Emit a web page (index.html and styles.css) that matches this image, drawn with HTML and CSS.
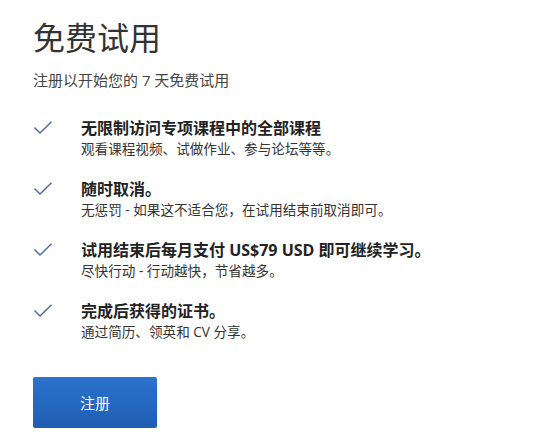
FILE: index.html
```html
<!DOCTYPE html>
<html lang="zh-CN">
<head>
<meta charset="UTF-8" />
<meta name="viewport" content="width=device-width, initial-scale=1" />
<title>免费试用</title>
<link rel="stylesheet" href="styles.css">
</head>
<body>
<main class="trial">
  <h1>免费试用</h1>
  <p class="intro">注册以开始您的 7 天免费试用</p>

  <ul class="benefits">
    <li>
      <svg class="check" viewBox="0 0 18 13" width="18" height="13"><path d="M0.5 6.5 L6 12 L17.5 0.8" fill="none" stroke="#4a68a8" stroke-width="1.4"/></svg>
      <div>
        <h3>无限制访问专项课程中的全部课程</h3>
        <p>观看课程视频、试做作业、参与论坛等等。</p>
      </div>
    </li>
    <li>
      <svg class="check" viewBox="0 0 18 13" width="18" height="13"><path d="M0.5 6.5 L6 12 L17.5 0.8" fill="none" stroke="#4a68a8" stroke-width="1.4"/></svg>
      <div>
        <h3>随时取消。</h3>
        <p>无惩罚 - 如果这不适合您，在试用结束前取消即可。</p>
      </div>
    </li>
    <li>
      <svg class="check" viewBox="0 0 18 13" width="18" height="13"><path d="M0.5 6.5 L6 12 L17.5 0.8" fill="none" stroke="#4a68a8" stroke-width="1.4"/></svg>
      <div>
        <h3>试用结束后每月支付 US$79 USD 即可继续学习。</h3>
        <p>尽快行动 - 行动越快，节省越多。</p>
      </div>
    </li>
    <li>
      <svg class="check" viewBox="0 0 18 13" width="18" height="13"><path d="M0.5 6.5 L6 12 L17.5 0.8" fill="none" stroke="#4a68a8" stroke-width="1.4"/></svg>
      <div>
        <h3>完成后获得的证书。</h3>
        <p>通过简历、领英和 CV 分享。</p>
      </div>
    </li>
  </ul>

  <button class="btn-signup">注册</button>
</main>
</body>
</html>
```

FILE: styles.css
```css
body {
  margin: 0;
  background: #fff;
  color: #333;
  font-family: "Open Sans", "Noto Sans CJK SC", sans-serif;
}
.trial {
  padding: 18px 33px;
}
h1 {
  margin: 0;
  font-size: 32px;
  font-weight: 400;
  line-height: 40px;
  color: #333;
}
.intro {
  margin: 11px 0 0;
  font-size: 15px;
  line-height: 22px;
  color: #444;
}
/* Lista de vantagens */
.benefits {
  list-style: none;
  margin: 26px 0 0;
  padding: 0;
}
.benefits li {
  display: flex;
  align-items: flex-start;
  margin-bottom: 19px;
}
.check {
  margin: 4px 0 0 1px;
  flex: none;
}
.benefits div {
  margin-left: 29px;
}
.benefits h3 {
  margin: 0;
  font-size: 16px;
  font-weight: 700;
  line-height: 22px;
  color: #222;
}
.benefits p {
  margin: 0;
  font-size: 13.6px;
  line-height: 20px;
  color: #333;
}
.btn-signup {
  display: block;
  margin-top: 35px;
  width: 124px;
  height: 51px;
  border: none;
  border-radius: 2px;
  background: linear-gradient(#2b73cd, #1f5eb2);
  color: #fff;
  font-family: "Noto Sans CJK SC", sans-serif;
  font-size: 15px;
  cursor: pointer;
}
```
